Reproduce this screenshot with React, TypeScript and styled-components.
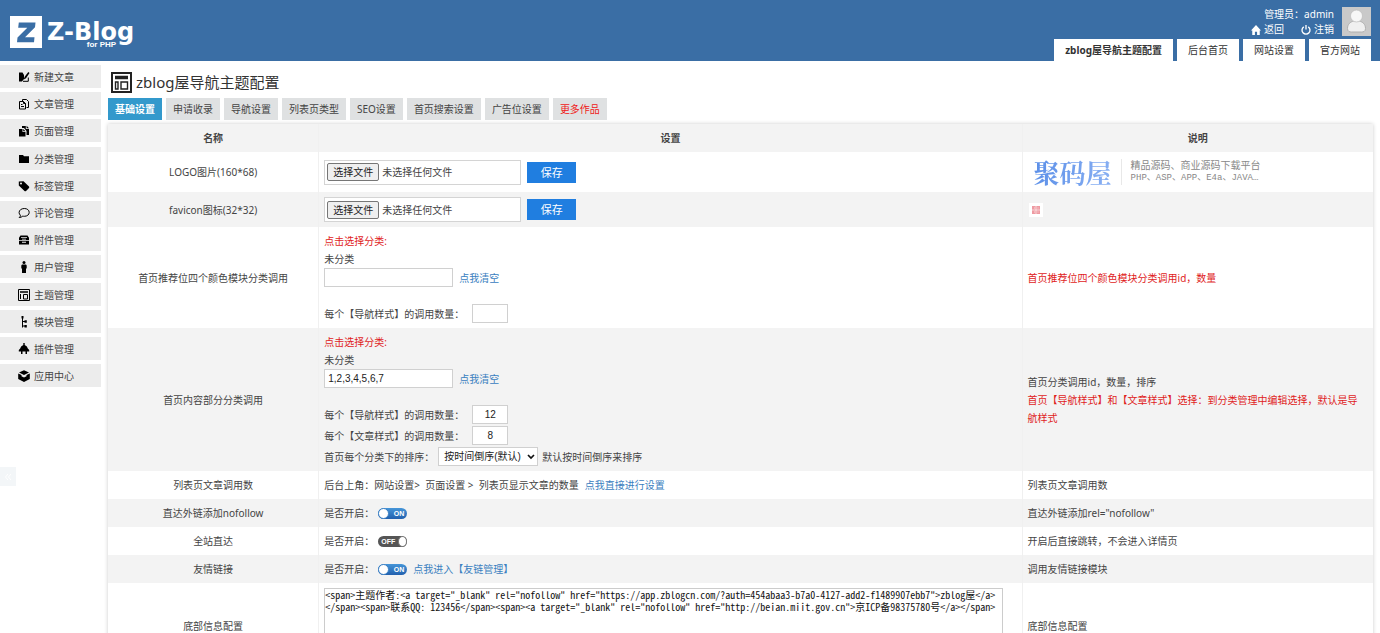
import React from "react";
import styled, { createGlobalStyle, css } from "styled-components";

const sans = `"Noto Sans", "Noto Sans CJK SC", sans-serif`;
const arial = `"Liberation Sans", "Noto Sans CJK SC", sans-serif`;
const mono = `"Noto Sans Mono CJK SC", "Liberation Mono", "Noto Sans CJK SC", monospace`;

const GlobalStyle = createGlobalStyle`
  * { box-sizing: border-box; }
  body {
    margin: 0;
    background: #fff;
    color: #444;
    font: 10px/18px ${sans};
    text-spacing-trim: space-all;
  }
  a { text-decoration: none; }
`;

const Page = styled.div`
  display: flex;
  flex-direction: column;
  height: 100vh;
  overflow: hidden;
`;

/* ---------- header ---------- */

const Header = styled.header`
  display: flex;
  justify-content: space-between;
  flex: none;
  height: 61px;
  padding: 0 9px 0 10px;
  background: #3a6ea5;
  color: #fff;
`;

const Brand = styled.a`
  display: flex;
  gap: 5px;
  align-items: flex-start;
  padding-top: 16px;
  color: #fff;
`;

const BrandName = styled.span`
  position: relative;
  font: bold 24px/32px "DejaVu Sans", ${sans};
`;

const BrandSub = styled.small`
  position: absolute;
  right: 18px;
  bottom: -1px;
  font: bold 8px/8px ${arial};
`;

const HeaderSide = styled.div`
  display: flex;
  flex-direction: column;
  justify-content: space-between;
  align-items: flex-end;
`;

const Account = styled.div`
  display: flex;
  gap: 8px;
  padding-top: 7px;
`;

const AccountText = styled.div`
  display: flex;
  flex-direction: column;
  align-items: flex-end;
  line-height: 15px;
`;

const AccountLinks = styled.div`
  display: flex;
  gap: 17px;
`;

const AccountLink = styled.a`
  display: flex;
  align-items: center;
  gap: 3px;
  color: #fff;
`;

const TopTabs = styled.nav`
  display: flex;
  gap: 4px;
`;

const TopTab = styled.a<{ $active?: boolean }>`
  padding: 0 11px;
  background: #fff;
  color: #333;
  line-height: 22px;
  font-weight: ${(p) => (p.$active ? "bold" : "normal")};
`;

/* ---------- side menu ---------- */

const Body = styled.div`
  display: flex;
  flex: 1;
  min-height: 0;
`;

const SideMenu = styled.nav`
  display: flex;
  flex-direction: column;
  gap: 5px;
  flex: none;
  width: 101px;
  padding-top: 4px;
`;

const MenuGroup = styled.ul`
  display: flex;
  flex-direction: column;
  gap: 4px;
  margin: 0;
  padding: 0;
  list-style: none;
`;

const MenuLink = styled.a`
  display: flex;
  align-items: center;
  gap: 4px;
  height: 23px;
  padding-left: 18px;
  background: #ececec;
  color: #444;
  svg { color: #000; }
`;

const Collapse = styled.button`
  position: fixed;
  left: 0;
  top: 467px;
  display: grid;
  place-items: center;
  width: 16px;
  height: 19px;
  padding: 0;
  border: 0;
  background: #f3f6f8;
  color: #fff;
`;

/* ---------- content ---------- */

const Main = styled.main`
  flex: 1;
  min-width: 0;
  padding: 10px 7px 20px;
  overflow-y: auto;
  scrollbar-width: none;
`;

const Title = styled.h1`
  display: flex;
  align-items: center;
  gap: 4px;
  height: 22px;
  margin: 0 0 5px 3px;
  color: #333;
  font: 15px/22px ${sans};
`;

const Tabs = styled.nav`
  display: flex;
  gap: 4px;
  margin-bottom: 4px;
`;

const Tab = styled.a<{ $active?: boolean; $hot?: boolean }>`
  padding: 0 7px;
  line-height: 22px;
  background: ${(p) => (p.$active ? "#3399cc" : "#dfe1e2")};
  color: ${(p) => (p.$active ? "#fff" : p.$hot ? "#f01818" : "#444")};
  font-weight: ${(p) => (p.$active ? "bold" : "normal")};
`;

const Table = styled.table`
  width: 100%;
  table-layout: fixed;
  border-collapse: separate;
  border-spacing: 0;
  box-shadow: 0 0 4px #ccc;
`;

const NameCol = styled.col`
  width: 16.7%;
`;
const SettingCol = styled.col`
  width: 55.6%;
`;

const Row = styled.tr<{ $shade?: boolean }>`
  background: ${(p) => (p.$shade ? "#f3f3f3" : "#fff")};
`;

const cell = css`
  padding: 5px;
  border-right: 1px solid #f0f0f0;
  &:last-child { border-right: 0; }
`;

const Head = styled.th`
  ${cell}
  font-weight: bold;
`;

const Name = styled.th`
  ${cell}
  font-weight: normal;
  text-align: center;
`;

const Cell = styled.td`
  ${cell}
`;

const Note = styled.td`
  ${cell}
  padding-right: 12px;
`;

const Red = styled.div`
  color: #e01c1c;
`;

const Line = styled.div<{ $gap?: number }>`
  display: flex;
  align-items: center;
  gap: 4px;
  margin-top: ${(p) => p.$gap ?? 0}px;
`;

const FileLine = styled.div`
  display: flex;
  align-items: center;
  gap: 6px;
`;

const FileField = styled.label`
  position: relative;
  display: flex;
  align-items: center;
  gap: 3px;
  width: 197px;
  height: 25px;
  padding: 0 2px;
  border: 1px solid #d4d4d4;
  background: #fff;
`;

const HiddenInput = styled.input`
  position: absolute;
  inset: 0;
  width: 100%;
  height: 100%;
  margin: 0;
  opacity: 0;
`;

const FileButton = styled.span`
  width: 52px;
  border: 1px solid #767676;
  border-radius: 2px;
  background: #efefef;
  color: #222;
  line-height: 16px;
  text-align: center;
`;

const SaveButton = styled.button`
  width: 49px;
  height: 21px;
  padding: 0;
  border: 0;
  background: #207ee0;
  color: #fff;
  font: 11px/21px ${sans};
`;

const fieldBox = css`
  height: 19px;
  border: 1px solid #d0d0d0;
  background: #fff;
  color: #222;
  font: 10px/16px ${arial};
`;

const TextField = styled.input`
  ${fieldBox}
  width: 129px;
  padding: 0 3px;
`;

const CountField = styled.input`
  ${fieldBox}
  width: 36px;
  margin-left: 4px;
  padding: 0;
  text-align: center;
`;

const SelectWrap = styled.span`
  position: relative;
  display: flex;
  svg {
    position: absolute;
    right: 2px;
    top: 6px;
    pointer-events: none;
  }
`;

const Select = styled.select`
  ${fieldBox}
  width: 100px;
  padding: 0 5px;
  appearance: none;
`;

const Link = styled.a`
  margin-left: 2px;
  color: #3a80c0;
`;

const Switch = styled.label<{ $on?: boolean }>`
  position: relative;
  display: flex;
  flex-direction: ${(p) => (p.$on ? "row" : "row-reverse")};
  justify-content: space-between;
  align-items: center;
  width: 29px;
  height: 11px;
  border-radius: 6px;
  background: ${(p) => (p.$on ? "linear-gradient(#4595d8, #2260ae)" : "#555")};
  color: #fff;
  font: bold 7px/11px ${arial};
`;

const Knob = styled.span<{ $on?: boolean }>`
  width: 11px;
  height: 11px;
  border: 1px solid ${(p) => (p.$on ? "#3c80c4" : "#777")};
  border-radius: 50%;
  background: #fff;
`;

const SwitchText = styled.span`
  padding: 0 3px;
`;

const CodeArea = styled.textarea`
  display: block;
  width: 98%;
  height: 76px;
  padding: 0;
  border: 1px solid #ccc;
  background: #fff;
  color: #111;
  font: 10px/12px ${mono};
  resize: none;
  overflow: hidden;
`;

const LogoPreview = styled.div`
  display: flex;
  align-items: center;
  height: 30px;
  padding-left: 6px;
`;

const LogoName = styled.strong`
  padding-right: 9px;
  background: linear-gradient(100deg, #5b8fe8, #8fb4f4);
  background-clip: text;
  color: transparent;
  font: bold 26px/30px "Noto Serif CJK SC", "Noto Sans CJK SC", serif;
`;

const LogoText = styled.div`
  padding-left: 9px;
  border-left: 1px solid #e8e8e8;
  color: #888;
  font: 10px/13px ${sans};
`;

const LogoTags = styled.div`
  font: 9px/13px "Liberation Mono", "Noto Sans CJK SC", monospace;
`;

const Favicon = styled.div`
  display: grid;
  place-items: center;
  width: 14px;
  height: 14px;
  margin-left: 1px;
  background: #fff;
`;

/* ---------- icons ---------- */

const glyphs: Record<string, React.ReactNode> = {
  write: (
    <>
      <path d="M1 1.500h3.500L6 4v4l-2 2.500H1z" fill="currentColor" />
      <path d="M10.300 1 6.500 6l-.7 2.600L8 7.200 11.500 2z" fill="currentColor" />
      <path d="M5 10.300h5.300V6.500" fill="none" stroke="currentColor" />
    </>
  ),
  docs: (
    <g fill="none" stroke="currentColor">
      <path d="M4.500 3V1.500h4l2 2v6H8.500" />
      <path d="M1.500 3.500h4l2 2v5.500h-6zM3 6.500h1.500M3 8.500h3M5.500 3.500v2h2" />
    </g>
  ),
  pages: (
    <g fill="currentColor">
      <path d="M4 3V1h3.800v3H11v6H8.500V6L6 3zM8.600.8 11 3.200H8.600z" />
      <path d="M1 4h3.500v3h3v4.500H1zM5.200 4 7.500 6.200H5.200z" />
    </g>
  ),
  folder: <path d="M1 2h4l1 1.200h5V10H1z" fill="currentColor" />,
  tag: (
    <path
      d="M.8 1.500v4L6.500 11q.8.6 1.500 0l3-3q.6-.8 0-1.500L5.500 1.200zM3 2.500a1 1 0 1 1 0 2 1 1 0 0 1 0-2z"
      fill="currentColor"
      fillRule="evenodd"
    />
  ),
  comment: (
    <path
      d="M6.300 1.500c2.900 0 4.900 1.600 4.900 3.900S9.200 9.300 6.300 9.300q-.8 0-1.500-.2-1.600 1.500-3.600 1.400Q2.600 9.500 2.400 8.200C1.500 7.500 1.100 6.500 1.100 5.500c0-2.300 2.300-4 5.200-4z"
      fill="none"
      stroke="currentColor"
    />
  ),
  drawer: (
    <path
      d="M2.500 1.500h7l1.500 2.300V10.500H1V3.800zM3 3.200v.8h6v-.8zM1 6v.7h10V6zM4 4.800v.6h4v-.6zM4 7.800v1h4v-1z"
      fill="currentColor"
      fillRule="evenodd"
    />
  ),
  person: (
    <g fill="currentColor">
      <circle cx="6" cy="1.600" r="1.500" />
      <path d="M4 3.500h4l.7 1v3H8V12H4V7.500h-.7v-3z" />
    </g>
  ),
  layout: (
    <g fill="none" stroke="currentColor">
      <path d="M.5.5h11v11H.5z" />
      <path d="M2 3h8" strokeWidth="1.500" />
      <path d="M2.500 5v5M5.500 10V5.500h4V10z" />
    </g>
  ),
  tree: (
    <g fill="currentColor">
      <path d="M3.500 0h2v2.500h-2zM4 2h1v9.500H4zM4 5h3v1H4zM4 9.500h3v1H4z" />
      <path d="M6.500 4.200h2.300v2.600H6.500zM6.500 9h2.300v2.500H6.500z" />
    </g>
  ),
  plug: (
    <path
      d="M5.300 0h1.400v2Q9.500 3 9.800 5.500L11.200 7v1.500H9V11H7.500V8.500h-3V11H3V8.500H.8V7l1.400-1.500Q2.500 3 5.300 2z"
      fill="currentColor"
    />
  ),
  box: (
    <g fill="currentColor">
      <path d="M6 .2 11 2.500 6 5 1 2.500z" />
      <path d="M.2 3.400 3.500 5v1.200L6 7.400l2.500-1.200V5l3.300-1.600V9L6 12 .2 9z" />
    </g>
  ),
  home: <path d="M6 0 12 6.500h-1.500V12H7.300V8H4.700v4H1.500V6.500H0z" fill="currentColor" />,
  power: (
    <path d="M3.300 2.200a4.800 4.800 0 1 0 5.400 0M6 0v5.500" fill="none" stroke="currentColor" strokeWidth="1.600" />
  ),
};

const Icon = ({ name, size = 12 }: { name: string; size?: number }) => (
  <svg width={size} height={size} viewBox="0 0 12 12" aria-hidden="true">
    {glyphs[name]}
  </svg>
);

const BrandMark = () => (
  <svg width="32" height="32" viewBox="0 0 32 32" aria-hidden="true">
    <path d="M0 0h32v32H0z" fill="#fff" />
    <path d="M8.800 6.500H25.500L25 11.200 15 21.300H24.500L24 26.300H7L7.500 21.500 17.300 11.700H8.200z" fill="#3a6ea5" />
  </svg>
);

const Avatar = () => (
  <svg width="29" height="29" viewBox="0 0 29 29" role="img" aria-label="admin">
    <path d="M0 0h29v29H0z" fill="#c9c9c9" />
    <path
      d="M5.500 21.500c0-4.500 3-6.500 6-7.500h6c3 1 6 3 6 7.500 0 3-2 3.500-4 3.500h-10c-2 0-4-.5-4-3.500z"
      fill="#f0f0f0"
      stroke="#b0b0b0"
    />
    <circle cx="14.500" cy="9" r="6" fill="#f7f7f7" stroke="#bbb" strokeWidth=".7" />
  </svg>
);

const TitleIcon = () => (
  <svg width="21" height="21" viewBox="0 0 21 21" aria-hidden="true" fill="none" stroke="#222">
    <path d="M1 1h19v19H1z" strokeWidth="2" />
    <path d="M4 5.500h13" strokeWidth="3.500" />
    <path d="M4.500 10h2.500v7H4.500zM10 10h6.500v7H10z" strokeWidth="1.400" />
  </svg>
);

/* ---------- data ---------- */

const menu = [
  [["write", "新建文章"], ["docs", "文章管理"], ["pages", "页面管理"]],
  [["folder", "分类管理"], ["tag", "标签管理"], ["comment", "评论管理"], ["drawer", "附件管理"], ["person", "用户管理"]],
  [["layout", "主题管理"], ["tree", "模块管理"], ["plug", "插件管理"], ["box", "应用中心"]],
];

const topTabs = ["zblog屋导航主题配置", "后台首页", "网站设置", "官方网站"];
const tabs = ["基础设置", "申请收录", "导航设置", "列表页类型", "SEO设置", "首页搜索设置", "广告位设置", "更多作品"];

const footerHtml = `<span>主题作者:<a target="_blank" rel="nofollow" href="https://app.zblogcn.com/?auth=454abaa3-b7a0-4127-add2-f1489907ebb7">zblog屋</a>
</span><span>联系QQ: 123456</span><span><a target="_blank" rel="nofollow" href="http://beian.miit.gov.cn">京ICP备98375780号</a></span>`;

const FileSetting = ({ label }: { label: string }) => (
  <FileLine>
    <FileField>
      <HiddenInput type="file" aria-label={label} />
      <FileButton>选择文件</FileButton>
      <span>未选择任何文件</span>
    </FileField>
    <SaveButton type="button">保存</SaveButton>
  </FileLine>
);

const Toggle = ({ on, label }: { on?: boolean; label: string }) => (
  <Switch $on={on}>
    <HiddenInput type="checkbox" defaultChecked={on} aria-label={label} />
    <Knob $on={on} />
    <SwitchText>{on ? "ON" : "OFF"}</SwitchText>
  </Switch>
);

const CategoryPicker = ({ value, label }: { value: string; label: string }) => (
  <>
    <Red>点击选择分类:</Red>
    <div>未分类</div>
    <Line>
      <TextField defaultValue={value} aria-label={label} />
      <Link href="#">点我清空</Link>
    </Line>
  </>
);

const Count = ({ kind, value, gap }: { kind: string; value: string; gap: number }) => (
  <Line as="label" $gap={gap}>
    <span>每个【{kind}】的调用数量：</span>
    <CountField defaultValue={value} />
  </Line>
);

export default function App() {
  return (
    <Page>
      <GlobalStyle />
      <Header>
        <Brand href="#">
          <BrandMark />
          <BrandName>
            Z-Blog<BrandSub>for PHP</BrandSub>
          </BrandName>
        </Brand>
        <HeaderSide>
          <Account>
            <AccountText>
              <span>管理员：admin</span>
              <AccountLinks>
                <AccountLink href="#"><Icon name="home" size={10} />返回</AccountLink>
                <AccountLink href="#"><Icon name="power" size={10} />注销</AccountLink>
              </AccountLinks>
            </AccountText>
            <Avatar />
          </Account>
          <TopTabs>
            {topTabs.map((t, i) => (
              <TopTab key={t} href="#" $active={i === 0}>{t}</TopTab>
            ))}
          </TopTabs>
        </HeaderSide>
      </Header>
      <Body>
        <SideMenu>
          {menu.map((group, i) => (
            <MenuGroup key={i}>
              {group.map(([icon, text]) => (
                <li key={text}>
                  <MenuLink href="#"><Icon name={icon} />{text}</MenuLink>
                </li>
              ))}
            </MenuGroup>
          ))}
        </SideMenu>
        <Main>
          <Title><TitleIcon />zblog屋导航主题配置</Title>
          <Tabs>
            {tabs.map((t, i) => (
              <Tab key={t} href="#" $active={i === 0} $hot={i === tabs.length - 1}>{t}</Tab>
            ))}
          </Tabs>
          <Table>
            <colgroup>
              <NameCol />
              <SettingCol />
              <col />
            </colgroup>
            <thead>
              <Row $shade>
                <Head>名称</Head>
                <Head>设置</Head>
                <Head>说明</Head>
              </Row>
            </thead>
            <tbody>
              <Row>
                <Name>LOGO图片(160*68)</Name>
                <Cell><FileSetting label="LOGO图片" /></Cell>
                <Note>
                  <LogoPreview>
                    <LogoName>聚码屋</LogoName>
                    <LogoText>
                      精品源码、商业源码下载平台
                      <LogoTags>PHP、ASP、APP、E4a、JAVA…</LogoTags>
                    </LogoText>
                  </LogoPreview>
                </Note>
              </Row>
              <Row $shade>
                <Name>favicon图标(32*32)</Name>
                <Cell><FileSetting label="favicon图标" /></Cell>
                <Note>
                  <Favicon>
                    <svg width="8" height="8" viewBox="0 0 8 8" aria-hidden="true">
                      <path d="M0 0h8v8H0z" fill="#ee9aa2" />
                      <path d="M0 4h8M4 0v8M2 2h1M5.500 2h1M2 6h1M5.500 6h1" stroke="#fff" strokeWidth=".6" />
                    </svg>
                  </Favicon>
                </Note>
              </Row>
              <Row>
                <Name>首页推荐位四个颜色模块分类调用</Name>
                <Cell>
                  <CategoryPicker value="" label="首页推荐位分类" />
                  <Count kind="导航样式" value="" gap={17} />
                </Cell>
                <Note><Red>首页推荐位四个颜色模块分类调用id，数量</Red></Note>
              </Row>
              <Row $shade>
                <Name>首页内容部分分类调用</Name>
                <Cell>
                  <CategoryPicker value="1,2,3,4,5,6,7" label="首页内容分类" />
                  <Count kind="导航样式" value="12" gap={17} />
                  <Count kind="文章样式" value="8" gap={2} />
                  <Line $gap={2}>
                    <label htmlFor="order">首页每个分类下的排序：</label>
                    <SelectWrap>
                      <Select id="order">
                        <option>按时间倒序(默认)</option>
                      </Select>
                      <svg width="10" height="8" viewBox="0 0 10 8" aria-hidden="true">
                        <path d="M2 2l3 3 3-3" fill="none" stroke="#111" strokeWidth="1.700" />
                      </svg>
                    </SelectWrap>
                    <span>默认按时间倒序来排序</span>
                  </Line>
                </Cell>
                <Note>
                  首页分类调用id，数量，排序
                  <Red>首页【导航样式】和【文章样式】选择：到分类管理中编辑选择，默认是导航样式</Red>
                </Note>
              </Row>
              <Row>
                <Name>列表页文章调用数</Name>
                <Cell>
                  <Line>
                    <span>后台上角：网站设置&gt;&nbsp; 页面设置 &gt;&nbsp; 列表页显示文章的数量</span>
                    <Link href="#">点我直接进行设置</Link>
                  </Line>
                </Cell>
                <Note>列表页文章调用数</Note>
              </Row>
              <Row $shade>
                <Name>直达外链添加nofollow</Name>
                <Cell>
                  <Line>是否开启：<Toggle on label="直达外链添加nofollow" /></Line>
                </Cell>
                <Note>直达外链添加rel="nofollow"</Note>
              </Row>
              <Row>
                <Name>全站直达</Name>
                <Cell>
                  <Line>是否开启：<Toggle label="全站直达" /></Line>
                </Cell>
                <Note>开启后直接跳转，不会进入详情页</Note>
              </Row>
              <Row $shade>
                <Name>友情链接</Name>
                <Cell>
                  <Line>
                    是否开启：<Toggle on label="友情链接" />
                    <Link href="#">点我进入【友链管理】</Link>
                  </Line>
                </Cell>
                <Note>调用友情链接模块</Note>
              </Row>
              <Row>
                <Name>底部信息配置</Name>
                <Cell>
                  <CodeArea defaultValue={footerHtml} aria-label="底部信息配置" spellCheck={false} />
                </Cell>
                <Note>底部信息配置</Note>
              </Row>
            </tbody>
          </Table>
        </Main>
      </Body>
      <Collapse type="button" aria-label="收起菜单">
        <svg width="8" height="8" viewBox="0 0 8 8" aria-hidden="true">
          <path d="M4 1 1.500 4 4 7M7 1 4.500 4 7 7" fill="none" stroke="currentColor" />
        </svg>
      </Collapse>
    </Page>
  );
}
